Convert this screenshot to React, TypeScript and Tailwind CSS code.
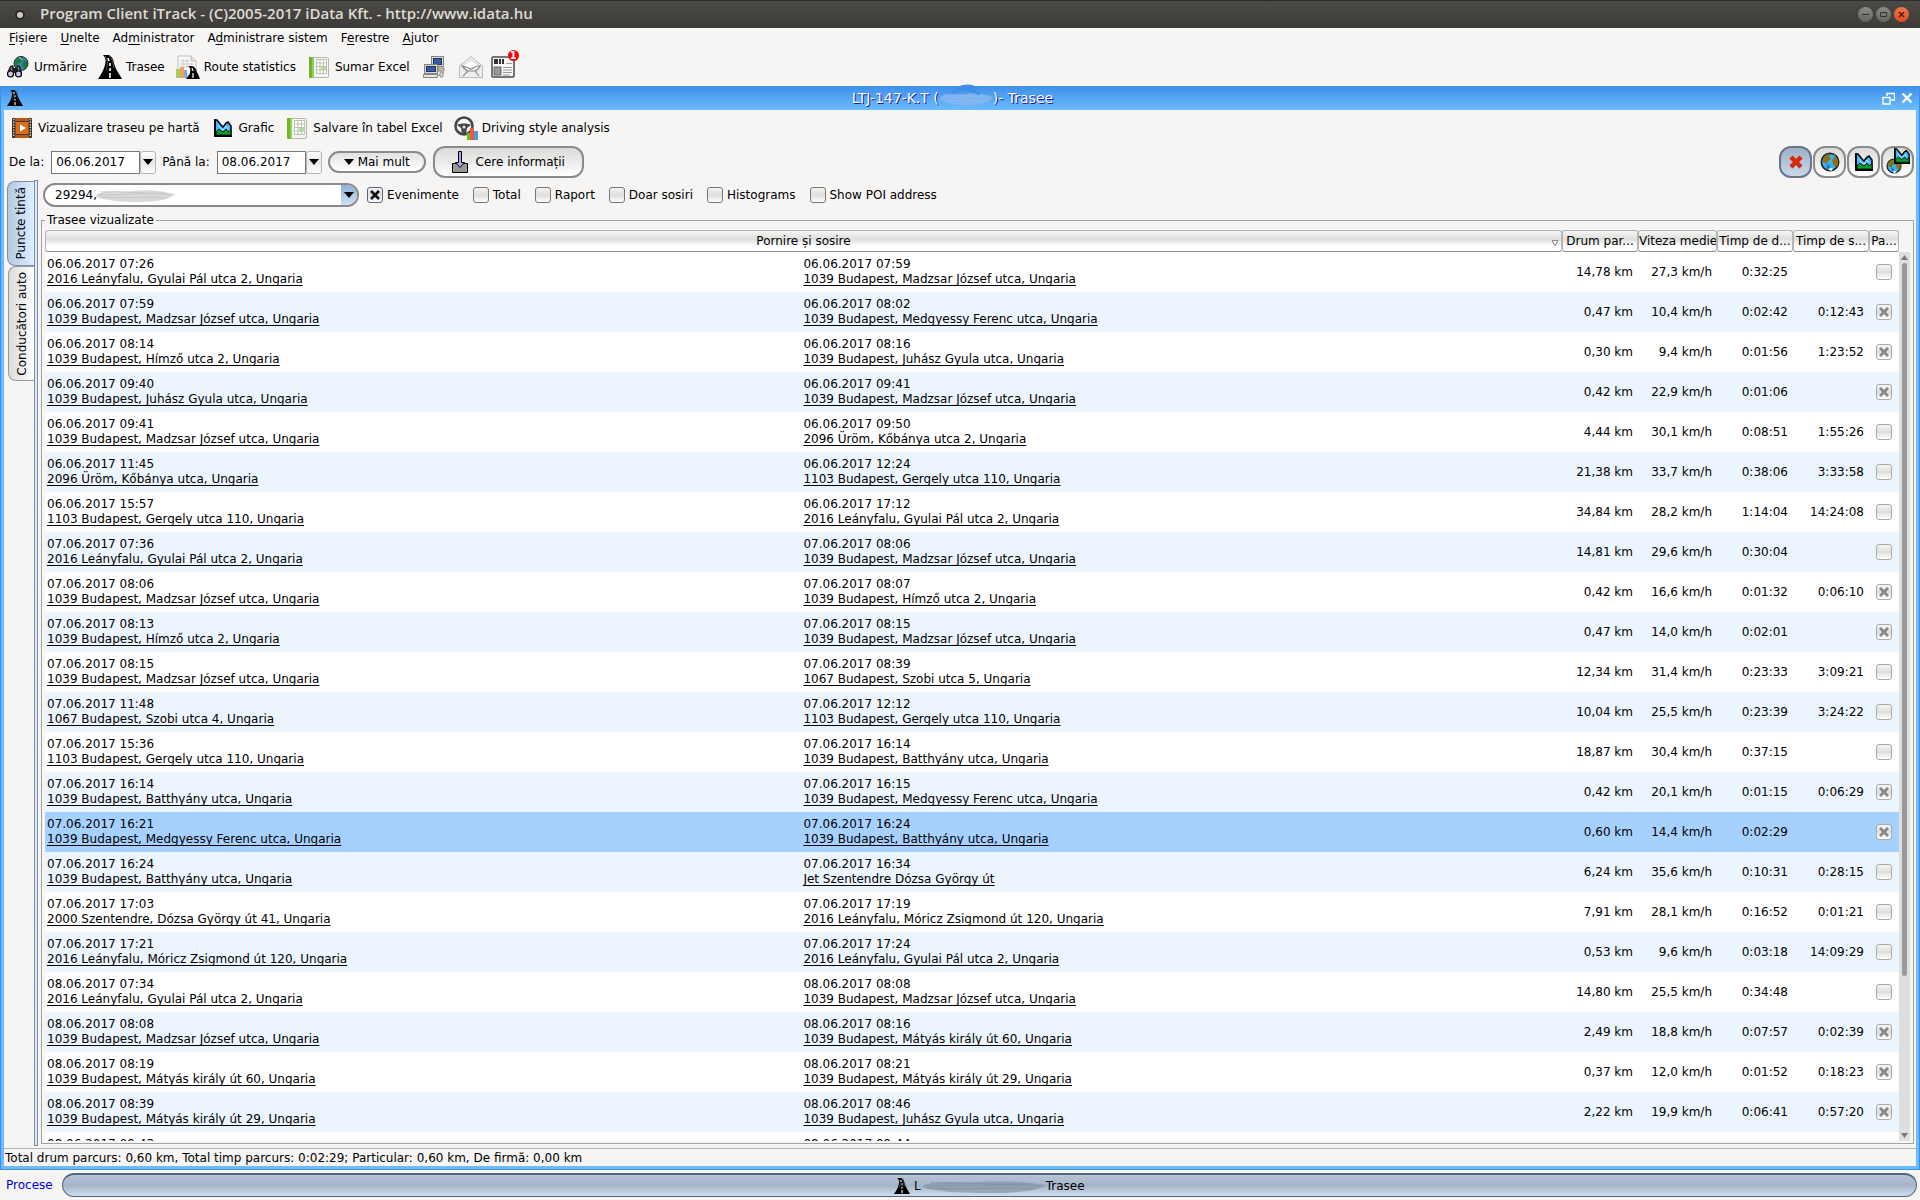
import React, { useState } from 'react';
import clsx from 'clsx';

interface Trip {
    from: [string, string];
    to: [string, string];
    km: string;
    speed: string;
    drive: string;
    stop: string;
    private: boolean;
}

const trip = (
    startTime: string, startPlace: string, endTime: string, endPlace: string,
    km: string, speed: string, drive: string, stop: string, isPrivate: boolean
): Trip => ({ from: [startTime, startPlace], to: [endTime, endPlace], km, speed, drive, stop, private: isPrivate });

const GYULAI = '2016 Leányfalu, Gyulai Pál utca 2, Ungaria';
const MADZSAR = '1039 Budapest, Madzsar József utca, Ungaria';
const MEDGYESSY = '1039 Budapest, Medgyessy Ferenc utca, Ungaria';
const HIMZO = '1039 Budapest, Hímző utca 2, Ungaria';
const JUHASZ = '1039 Budapest, Juhász Gyula utca, Ungaria';
const GERGELY = '1103 Budapest, Gergely utca 110, Ungaria';
const BATTHYANY = '1039 Budapest, Batthyány utca, Ungaria';
const MORICZ = '2016 Leányfalu, Móricz Zsigmond út 120, Ungaria';
const MATYAS_60 = '1039 Budapest, Mátyás király út 60, Ungaria';
const MATYAS_29 = '1039 Budapest, Mátyás király út 29, Ungaria';

const trips: Trip[] = [
    trip('06.06.2017 07:26', GYULAI, '06.06.2017 07:59', MADZSAR, '14,78', '27,3', '0:32:25', '', false),
    trip('06.06.2017 07:59', MADZSAR, '06.06.2017 08:02', MEDGYESSY, '0,47', '10,4', '0:02:42', '0:12:43', true),
    trip('06.06.2017 08:14', HIMZO, '06.06.2017 08:16', JUHASZ, '0,30', '9,4', '0:01:56', '1:23:52', true),
    trip('06.06.2017 09:40', JUHASZ, '06.06.2017 09:41', MADZSAR, '0,42', '22,9', '0:01:06', '', true),
    trip('06.06.2017 09:41', MADZSAR, '06.06.2017 09:50', '2096 Üröm, Kőbánya utca 2, Ungaria', '4,44', '30,1', '0:08:51', '1:55:26', false),
    trip('06.06.2017 11:45', '2096 Üröm, Kőbánya utca, Ungaria', '06.06.2017 12:24', GERGELY, '21,38', '33,7', '0:38:06', '3:33:58', false),
    trip('06.06.2017 15:57', GERGELY, '06.06.2017 17:12', GYULAI, '34,84', '28,2', '1:14:04', '14:24:08', false),
    trip('07.06.2017 07:36', GYULAI, '07.06.2017 08:06', MADZSAR, '14,81', '29,6', '0:30:04', '', false),
    trip('07.06.2017 08:06', MADZSAR, '07.06.2017 08:07', HIMZO, '0,42', '16,6', '0:01:32', '0:06:10', true),
    trip('07.06.2017 08:13', HIMZO, '07.06.2017 08:15', MADZSAR, '0,47', '14,0', '0:02:01', '', true),
    trip('07.06.2017 08:15', MADZSAR, '07.06.2017 08:39', '1067 Budapest, Szobi utca 5, Ungaria', '12,34', '31,4', '0:23:33', '3:09:21', false),
    trip('07.06.2017 11:48', '1067 Budapest, Szobi utca 4, Ungaria', '07.06.2017 12:12', GERGELY, '10,04', '25,5', '0:23:39', '3:24:22', false),
    trip('07.06.2017 15:36', GERGELY, '07.06.2017 16:14', BATTHYANY, '18,87', '30,4', '0:37:15', '', false),
    trip('07.06.2017 16:14', BATTHYANY, '07.06.2017 16:15', MEDGYESSY, '0,42', '20,1', '0:01:15', '0:06:29', true),
    trip('07.06.2017 16:21', MEDGYESSY, '07.06.2017 16:24', BATTHYANY, '0,60', '14,4', '0:02:29', '', true),
    trip('07.06.2017 16:24', BATTHYANY, '07.06.2017 16:34', 'Jet Szentendre Dózsa György út', '6,24', '35,6', '0:10:31', '0:28:15', false),
    trip('07.06.2017 17:03', '2000 Szentendre, Dózsa György út 41, Ungaria', '07.06.2017 17:19', MORICZ, '7,91', '28,1', '0:16:52', '0:01:21', false),
    trip('07.06.2017 17:21', MORICZ, '07.06.2017 17:24', GYULAI, '0,53', '9,6', '0:03:18', '14:09:29', false),
    trip('08.06.2017 07:34', GYULAI, '08.06.2017 08:08', MADZSAR, '14,80', '25,5', '0:34:48', '', false),
    trip('08.06.2017 08:08', MADZSAR, '08.06.2017 08:16', MATYAS_60, '2,49', '18,8', '0:07:57', '0:02:39', true),
    trip('08.06.2017 08:19', MATYAS_60, '08.06.2017 08:21', MATYAS_29, '0,37', '12,0', '0:01:52', '0:18:23', true),
    trip('08.06.2017 08:39', MATYAS_29, '08.06.2017 08:46', JUHASZ, '2,22', '19,9', '0:06:41', '0:57:20', true),
    // still loading
    trip('08.06.2017 09:43', '', '08.06.2017 09:44', '', '', '', '', '', false),
];

/* ---------- icons ---------- */

const RoadIcon = ({ className }: { className: string }) => (
    <svg viewBox="0 0 24 24" className={className} aria-hidden="true">
        <path d="M5 0h6c5 3 4 6 6 11 1 4 5 9 7 13H0c3-5 6-9 7-14 1-4 1-7-2-10z" fill="#000" />
        <path d="M7 1c3 4 3 9 1 14M11 1c4 3 4 8 5 12" stroke="#777" strokeWidth="0.7" fill="none" />
        <path d="M10 3l1 3M12 8v3M12 13v3M12 18v5" stroke="#fff" strokeWidth="1.6" />
    </svg>
);

const TrackIcon = () => (
    <svg viewBox="0 0 22 22" className="size-[22px]" aria-hidden="true">
        <circle cx="14" cy="7.5" r="7" fill="#3c7fa6" stroke="#123" />
        <path d="M9 3c3-3 6-2 7 0l-2 3-3 1-2 4c-2-2-2-5 0-8zM17 4l3 2v5l-3 2-2-4z" fill="#1c7a42" />
        <path d="M12 2c2 0 3 1 3 2" stroke="#bfe6e0" fill="none" />
        <path d="M3 10l3-1 1 3h2l1-3 3 1 2 7H0z" fill="#222" />
        <path d="M4 11l1 4M11 11l1 4" stroke="#999" />
        <circle cx="3.5" cy="18" r="3" fill="#c5c5f0" stroke="#000" strokeWidth="1.2" />
        <circle cx="11.5" cy="18" r="3" fill="#c5c5f0" stroke="#000" strokeWidth="1.2" />
    </svg>
);

const StatsIcon = () => (
    <svg viewBox="0 0 24 24" className="size-6" aria-hidden="true">
        <path d="M2 1h13l5 5v15H2z" fill="#fafafa" stroke="#bbb" />
        <path d="M15 1v5h5" fill="#e4e4e4" stroke="#bbb" />
        <path d="M4 6h9M4 9h14M4 12h14M7 4v9M11 4v9M15 8v5" stroke="#ccc" />
        <path d="M0 14h4v9H0z" fill="#a3d15c" />
        <path d="M4 12h4v11H4z" fill="#f2a35e" />
        <path d="M8 15h3v8H8z" fill="#6fb1dc" />
        <path d="M12 11h4c5 2 4 5 6 8l2 5H10c2-3 4-4 4-7 1-3 0-4-2-6z" fill="#000" />
        <path d="M16 13l1 3M17 18v5" stroke="#fff" strokeWidth="1.2" />
    </svg>
);

const ExcelIcon = () => (
    <svg viewBox="0 0 22 22" className="size-[22px]" aria-hidden="true">
        <rect x="1.5" y="1.5" width="19" height="20" rx="1.5" fill="#f4f4f4" stroke="#b5b5b5" />
        <path d="M1 1h5v21H2c-1 0-1-1-1-2z" fill="#6cb52d" />
        <path d="M4 1h2v21H4z" fill="#8fd04e" />
        <path d="M8.5 3.5h10v14h-10z" fill="#fff" stroke="#b9c4ae" />
        <path d="M13 10h5v4h-5z" fill="#b7e08c" />
        <path d="M8 7h11M8 10.5h11M8 14h11M12 3v15M15.500 3v15" stroke="#b9c4ae" />
    </svg>
);

const ComputersIcon = () => (
    <svg viewBox="0 0 22 22" className="size-[22px]" aria-hidden="true">
        <rect x="8.5" y="0.5" width="12" height="10" fill="#d9d9d0" stroke="#85857d" />
        <rect x="10.5" y="2.5" width="8" height="6" fill="#3a5c9e" stroke="#1d3568" />
        <path d="M15 12h6v3h-6z" fill="#c8c8c0" stroke="#85857d" />
        <rect x="1.5" y="8.5" width="13" height="9" fill="#d9d9d0" stroke="#85857d" />
        <rect x="3.5" y="10.5" width="9" height="5" fill="#3a5c9e" stroke="#1d3568" />
        <path d="M0.500 18.500h14v3h-14z" fill="#e8e8e0" stroke="#85857d" />
        <path d="M15 19c3 1 5 0 5-3" stroke="#85857d" fill="none" />
        <rect x="17" y="16" width="3" height="5" rx="1" fill="#ddd" stroke="#85857d" />
    </svg>
);

const MailIcon = () => (
    <svg viewBox="0 0 24 22" className="h-[22px] w-6" aria-hidden="true">
        <path d="M0.500 10L12 0.500 23.500 10v11.500H0.500z" fill="#eee" stroke="#b9b9b9" />
        <path d="M4 9l8-5 8 5v5H4z" fill="#fff" stroke="#d2d2d2" />
        <path d="M3 10l4 1 5 2 6-3h3l-4 5H8zM4 20l5-5h7l4 5" stroke="#8b8b8b" strokeWidth="1.2" fill="none" />
    </svg>
);

const NewsIcon = () => (
    <svg viewBox="0 0 24 22" className="h-[22px] w-6" aria-hidden="true">
        <rect x="1" y="1" width="22" height="20" rx="1" fill="#f7f7f7" stroke="#4c4c4c" strokeWidth="1.5" />
        <path d="M3 3h4v5H3zM8 3h2v5H8zM11 3h2v5h-2z" fill="#333" />
        <path d="M3 11h7v8H3z" fill="#999" stroke="#666" />
        <path d="M12 11.500h9M12 14h9M12 16.500h9M12 19h7M15 7.500h6" stroke="#999" />
    </svg>
);

const FilmIcon = () => (
    <svg viewBox="0 0 22 22" className="size-[22px]" aria-hidden="true">
        <rect x="1" y="1" width="20" height="20" rx="1" fill="#3a322c" />
        <path d="M4.500 1h13v20h-13z" fill="#d86f1c" />
        <path d="M4.500 1h13v3h-13zM4.500 18h13v3h-13z" fill="#b95a18" />
        <path d="M4.500 4.500h13M4.500 17.500h13" stroke="#5c3410" />
        <path d="M2.700 2v18M19.300 2v18" stroke="#ddd" strokeWidth="1.3" strokeDasharray="1.3 1.3" />
        <path d="M9 7.500l6 3.500-6 3.500z" fill="#fff" />
    </svg>
);

const ChartIcon = ({ className }: { className: string }) => (
    <svg viewBox="0 0 18 18" className={className} aria-hidden="true">
        <path d="M1 1h2l4 5 2 2 3-4 2-1 3 4v10H1z" fill="#47b4ff" stroke="#000" strokeWidth="1.5" />
        <path d="M4 6l3 4 2 1 3-4 2 3" stroke="#b9e4ff" fill="none" />
        <path d="M2 13l3-3 4 3 3-3 2 3 3-2v5H2z" fill="#0c9b25" stroke="#000" strokeWidth="0.8" />
        <path d="M1 0v17.200h17" stroke="#000" strokeWidth="1.7" fill="none" />
    </svg>
);

const WheelIcon = () => (
    <svg viewBox="0 0 24 24" className="size-6" aria-hidden="true">
        <circle cx="10" cy="10" r="8.500" fill="none" stroke="#474747" strokeWidth="2.6" />
        <path d="M3 9c4-2 10-2 14 0l-4 3-1 6H8l-1-6z" fill="#474747" />
        <circle cx="10" cy="11" r="1.6" fill="#ddd" />
        <path d="M13 17h3v7h-3z" fill="#6abf1e" />
        <path d="M16 12h4v12h-4z" fill="#f0573c" />
        <path d="M20 15h4v9h-4z" fill="#4a9de0" />
    </svg>
);

const GlobeIcon = ({ className }: { className: string }) => (
    <svg viewBox="0 0 20 20" className={className} aria-hidden="true">
        <circle cx="10" cy="10" r="8.700" fill="#3aaef0" stroke="#222" strokeWidth="1.6" />
        <path d="M3 6c2-3 5-4 8-4l-2 3 2 2-3 2-1 3-4-2zM12 8l3-3 3 3v5l-3 2-2-3zM14 2l2 2-2 1z" fill="#8a7412" />
        <path d="M7 12l3 2-1 4-2-2z" fill="#1f6fa8" />
        <path d="M8 17c2-1 4-1 5 0l-2 2z" fill="#fff" />
    </svg>
);

const DownloadIcon = () => (
    <svg viewBox="0 0 16 22" className="h-[22px] w-4" aria-hidden="true">
        <path d="M0.500 12.500h15v9H0.500z" fill="#999" stroke="#000" />
        <path d="M6.500 0.500h3v11h3L8 16.500l-4.500-5h3z" fill="#a9a9ee" stroke="#000" />
    </svg>
);

const CaretDown = () => (
    <svg viewBox="0 0 10 6" className="h-[6px] w-[10px] shrink-0" aria-hidden="true">
        <path d="M0 0h10L5 6z" fill="#000" />
    </svg>
);

// name part that the operator has wiped out
const Smudge = ({ className, tone, children }: { className?: string; tone: string; children?: React.ReactNode }) => (
    <svg viewBox="0 0 80 16" preserveAspectRatio="none" className={clsx('overflow-visible', className)} aria-hidden="true">
        <path d="M0 9C12 1 24 6 38 4s28 0 42 3c-6 7-24 8-38 8S10 14 0 9z" fill={tone} opacity="0.7" />
        <path d="M2 7c20 3 42-3 74 1M4 10c22 2 42-1 68 1M6 5c20-1 44 2 64 1" stroke={tone} strokeWidth="1" fill="none" />
        {children}
    </svg>
);

/* ---------- small controls ---------- */

interface CheckProps {
    id: string;
    checked: boolean;
    onChange?: () => void;
    muted?: boolean;
    label: string;
    hideLabel?: boolean;
}

const Check = ({ id, checked, onChange, muted, label, hideLabel }: CheckProps) => (
    <span className="flex items-center gap-1">
        <span className="relative block size-4 shrink-0">
            <input
                id={id}
                type="checkbox"
                checked={checked}
                onChange={onChange}
                readOnly={!onChange}
                aria-label={hideLabel ? label : undefined}
                className={clsx(
                    'block size-4 appearance-none rounded-[3px] border bg-linear-to-b from-[#f4f4f4] via-[#dededc] to-white',
                    muted ? 'border-[#aaa]' : 'border-[#777]',
                    checked && !muted && 'border-[#56657a] from-[#dbe7f6] via-[#c3d2e6] to-[#eaf3ff]'
                )}
            />
            {checked && (
                <svg viewBox="0 0 16 16" className="pointer-events-none absolute inset-0 size-4" aria-hidden="true">
                    <path d="M4 4l8 8M12 4l-8 8" stroke={muted ? '#858585' : '#111'} strokeWidth="2.6" />
                </svg>
            )}
        </span>
        {!hideLabel && <label htmlFor={id}>{label}</label>}
    </span>
);

const ToolButton = ({ icon, children }: { icon: React.ReactNode; children: React.ReactNode }) => (
    <button className="flex items-center gap-1 whitespace-nowrap">
        <span className="flex w-6 justify-center">{icon}</span>
        {children}
    </button>
);

const DateField = ({ id, label, value }: { id: string; label: string; value: string }) => (
    <div className="flex items-center">
        <label htmlFor={id} className="mr-[7px]">{label}</label>
        <input id={id} type="text" defaultValue={value} className="h-[23px] w-[89px] border border-[#777] bg-white px-1" />
        <button aria-label="Calendar" className="flex h-[23px] w-4 items-center justify-center rounded-[3px] border border-[#b5b5b5] bg-linear-to-b from-white via-[#e6e6e4] to-white">
            <CaretDown />
        </button>
    </div>
);

const viewButton = 'flex h-8 w-[33px] items-center justify-center rounded-xl border-2';

/* ---------- page parts ---------- */

const menus: [string, string, string][] = [
    ['', 'F', 'ișiere'],
    ['', 'U', 'nelte'],
    ['Ad', 'm', 'inistrator'],
    ['A', 'd', 'ministrare sistem'],
    ['F', 'e', 'restre'],
    ['', 'A', 'jutor'],
];

const TitleBar = () => (
    <header className="flex h-7 shrink-0 items-center border-t border-[#2c2b28] bg-linear-to-b from-[#4b4a46] to-[#3c3b37] pr-[11px] pl-[15px] text-[#dfdbd2]">
        <span className="mr-[15px] size-[10px] rounded-full border-2 border-[#2a2926] bg-[#cfccc4]" />
        <h1 className="flex-1 pb-[3px] font-['Open_Sans',sans-serif] text-[15px] font-semibold">
            Program Client iTrack - (C)2005-2017 iData Kft. - http://www.idata.hu
        </h1>
        <div className="flex gap-[3px]">
            <button aria-label="Minimize" className="size-[15px] rounded-full bg-linear-to-b from-[#8c8b85] to-[#64635e]">
                <svg viewBox="0 0 15 15"><path d="M4 7.500h7" stroke="#33322f" /></svg>
            </button>
            <button aria-label="Maximize" className="size-[15px] rounded-full bg-linear-to-b from-[#8c8b85] to-[#64635e]">
                <svg viewBox="0 0 15 15"><path d="M4.500 5.500h6v4h-6z" stroke="#33322f" fill="none" /></svg>
            </button>
            <button aria-label="Close" className="size-[15px] rounded-full bg-linear-to-b from-[#f4744c] to-[#e04a1b]">
                <svg viewBox="0 0 15 15"><path d="M5 5l5 5M10 5l-5 5" stroke="#4a1c0c" strokeWidth="1.4" /></svg>
            </button>
        </div>
    </header>
);

const MainToolbar = () => (
    <div className="flex h-[38px] shrink-0 items-center gap-[11px] pl-[6px]">
        <ToolButton icon={<TrackIcon />}>Urmărire</ToolButton>
        <ToolButton icon={<RoadIcon className="size-6" />}>Trasee</ToolButton>
        <ToolButton icon={<StatsIcon />}>Route statistics</ToolButton>
        <ToolButton icon={<ExcelIcon />}>Sumar Excel</ToolButton>
        <div className="flex gap-2 pl-[2px]">
            <button aria-label="Computers" className="mr-[6px]"><ComputersIcon /></button>
            <button aria-label="Messages"><MailIcon /></button>
            <button aria-label="News" className="relative">
                <NewsIcon />
                <span className="absolute -top-[6px] -right-1 flex size-[11px] items-center justify-center rounded-full bg-[#f00] text-[10px] font-bold text-white">1</span>
            </button>
        </div>
    </div>
);

const header = 'relative h-[22px] overflow-hidden rounded-[3px] border border-[#b5b5b5] border-b-[#8c8c8c] bg-linear-to-b from-[#f6f6f6] via-[#dededc] via-40% to-white to-75% p-0 text-center font-normal whitespace-nowrap';

const TripTable = () => {
    const [selected, setSelected] = useState(14);

    return (
        <table className="w-full table-fixed border-separate border-spacing-0">
            <colgroup>
                <col className="w-[40.8%]" />
                <col />
                <col className="w-[76px]" />
                <col className="w-[79px]" />
                <col className="w-[76px]" />
                <col className="w-[76px]" />
                <col className="w-[30px]" />
            </colgroup>
            <thead>
                <tr>
                    <th colSpan={2} className={header}>
                        Pornire și sosire
                        <svg viewBox="0 0 8 7" className="absolute right-[2px] bottom-1 h-[7px] w-2" aria-hidden="true">
                            <path d="M1 0.500h6L4 6z" fill="#fff" stroke="#888" />
                        </svg>
                    </th>
                    <th className={header}>Drum par...</th>
                    <th className={header}>Viteza medie</th>
                    <th className={header}>Timp de d...</th>
                    <th className={header}>Timp de s...</th>
                    <th className={header}>Pa...</th>
                </tr>
            </thead>
            <tbody>
                {trips.map((item, i) => (
                    <tr
                        key={item.from[0]}
                        onClick={() => setSelected(i)}
                        className={clsx('h-10', i === selected ? 'bg-[#a6d1ff]' : i % 2 ? 'bg-[#ecf5fe]' : 'bg-white')}
                    >
                        {[item.from, item.to].map(([time, place]) => (
                            <td key={time} className="h-10 overflow-hidden px-[2px] py-[5px] align-top leading-[15px] whitespace-nowrap">
                                <div>{time}</div>
                                {place && <a href="#map" className="block underline underline-offset-2">{place}</a>}
                            </td>
                        ))}
                        <td className="py-0 pr-[5px] text-right">{item.km && `${item.km} km`}</td>
                        <td className="py-0 pr-[5px] text-right">{item.speed && `${item.speed} km/h`}</td>
                        <td className="py-0 pr-[5px] text-right">{item.drive}</td>
                        <td className="py-0 pr-[5px] text-right">{item.stop}</td>
                        <td className="py-0 pl-[7px]">
                            {item.km && <Check id={`private-${i}`} checked={item.private} muted hideLabel label="Particular" />}
                        </td>
                    </tr>
                ))}
            </tbody>
        </table>
    );
};

const ScrollBar = () => (
    <div className="mt-[22px] flex w-[11px] flex-col items-center bg-[#dfdfdf] py-[3px]" aria-hidden="true">
        <svg viewBox="0 0 7 5" className="h-[5px] w-[7px]"><path d="M3.500 0L7 5H0z" fill="#777" /></svg>
        <div className="mt-[3px] flex w-[5px] flex-1 flex-col">
            <div className="h-[82%] rounded-full bg-[#999]" />
        </div>
        <svg viewBox="0 0 7 5" className="h-[5px] w-[7px]"><path d="M0 0h7L3.500 5z" fill="#777" /></svg>
    </div>
);

const filters = ['Evenimente', 'Total', 'Raport', 'Doar sosiri', 'Histograms', 'Show POI address'];

const RoutesWindow = () => {
    const [active, setActive] = useState<string[]>(['Evenimente']);
    const toggle = (name: string) =>
        setActive(active.includes(name) ? active.filter((f) => f !== name) : [...active, name]);

    return (
        <main className="flex min-h-0 flex-1 flex-col border-r border-b border-l border-[#3d8fe6]">
            <div className="flex h-6 shrink-0 items-center bg-linear-to-b from-[#3d8fe9] to-[#6cbcff] px-[6px] text-white">
                <RoadIcon className="size-4" />
                <h2 className="flex flex-1 items-center justify-center text-[14px] [text-shadow:1px_1px_0_#1a1a9c]">
                    LTJ-147-K.T (
                    <Smudge className="h-4 w-[54px]" tone="#8fb8f0">
                        <path d="M24 0c8-5 24-5 32-1M20 3c12-6 24-5 40 1" stroke="#3d8fe9" strokeWidth="3" fill="none" />
                    </Smudge>
                    )- Trasee
                </h2>
                <button aria-label="Restore" className="mr-[6px]">
                    <svg viewBox="0 0 13 13" className="size-[13px]">
                        <path d="M5 4V1.500h7.500V8H9M1 5.500h7v6.500H1z" fill="none" stroke="#fff" strokeWidth="1.4" />
                    </svg>
                </button>
                <button aria-label="Close window">
                    <svg viewBox="0 0 12 12" className="size-3">
                        <path d="M1.500 1.500l9 9M10.500 1.500l-9 9" stroke="#fff" strokeWidth="2.4" />
                    </svg>
                </button>
            </div>

            <div className="flex min-h-0 flex-1 flex-col border-x-3 border-b-3 border-[#6cbcff] bg-[#f6f5f4]">
                <div className="flex h-9 shrink-0 items-center gap-[11px] pl-[6px]">
                    <ToolButton icon={<FilmIcon />}>Vizualizare traseu pe hartă</ToolButton>
                    <ToolButton icon={<ChartIcon className="size-[18px]" />}>Grafic</ToolButton>
                    <ToolButton icon={<ExcelIcon />}>Salvare în tabel Excel</ToolButton>
                    <ToolButton icon={<WheelIcon />}>Driving style analysis</ToolButton>
                </div>

                <div className="flex h-8 shrink-0 items-center pr-[2px] pl-[5px]">
                    <DateField id="from" label="De la:" value="06.06.2017" />
                    <div className="w-[6px]" />
                    <DateField id="to" label="Până la:" value="08.06.2017" />
                    <button className="ml-[6px] flex h-[22px] w-[98px] items-center justify-center gap-1 rounded-full border-2 border-[#8a8a8a] bg-linear-to-b from-[#e2e2e2] via-[#f2f2f0] to-white">
                        <CaretDown />
                        Mai mult
                    </button>
                    <button className="ml-[7px] flex h-8 w-[151px] items-center justify-center gap-2 rounded-xl border-2 border-[#8a8a8a] bg-linear-to-b from-[#dadad8] via-[#ececea] to-white">
                        <DownloadIcon />
                        Cere informații
                    </button>
                    <div className="ml-auto flex gap-px">
                        <button aria-label="Table only" className={clsx(viewButton, 'border-[#66758a] bg-linear-to-b from-[#9fb0c6] to-[#cad8ea]')}>
                            <svg viewBox="0 0 14 14" className="size-[14px]">
                                <path d="M2 2l10 10M12 2L2 12" stroke="#d42a0c" strokeWidth="4.5" />
                            </svg>
                        </button>
                        <button aria-label="Map" className={clsx(viewButton, 'border-[#8a8a8a] bg-linear-to-b from-[#dadad8] to-white')}>
                            <GlobeIcon className="size-5" />
                        </button>
                        <button aria-label="Chart" className={clsx(viewButton, 'border-[#8a8a8a] bg-linear-to-b from-[#dadad8] to-white')}>
                            <ChartIcon className="size-[18px]" />
                        </button>
                        <button aria-label="Map and chart" className={clsx(viewButton, 'relative border-[#8a8a8a] bg-linear-to-b from-[#dadad8] to-white')}>
                            <GlobeIcon className="absolute bottom-[2px] left-[3px] size-4" />
                            <ChartIcon className="absolute top-0 right-[2px] size-4" />
                        </button>
                    </div>
                </div>

                <div className="flex min-h-0 flex-1 pl-[3px]">
                    <nav className="flex w-[27px] shrink-0 flex-col items-end pt-[3px]">
                        <button className="flex h-[85px] w-[27px] items-center justify-center rounded-l-lg border border-r-0 border-[#7d8ea6] bg-linear-to-r from-[#b4c8e2] via-[#c9dcf4] to-[#dfeeff]">
                            <span className="rotate-180 whitespace-nowrap [writing-mode:vertical-rl]">Puncte tintă</span>
                        </button>
                        <button className="flex h-[115px] w-[26px] items-center justify-center rounded-l-lg border border-r-0 border-[#999] bg-linear-to-r from-[#dcdcda] via-[#ececea] to-white">
                            <span className="rotate-180 whitespace-nowrap [writing-mode:vertical-rl]">Conducători auto</span>
                        </button>
                    </nav>

                    <div className="my-[2px] w-1 shrink-0 border border-[#7d8ea6] bg-[#dce9f9]" />

                    <div className="flex min-w-0 flex-1 flex-col pr-[2px] pb-1 pl-[3px]">
                        <div className="flex h-[34px] shrink-0 items-center gap-[14px] pl-[2px]">
                            <div className="relative mr-[-6px] flex h-6 w-[316px] items-center overflow-hidden rounded-full border-2 border-[#8a8a8a] bg-white">
                                <select aria-label="Vehicul" className="h-full flex-1 appearance-none pl-[10px]">
                                    <option>29294,</option>
                                </select>
                                <Smudge className="pointer-events-none absolute left-[50px] h-4 w-[80px]" tone="#c9c9c9" />
                                <span className="pointer-events-none flex h-full w-4 items-center justify-center bg-linear-to-b from-[#8fb0d6] to-[#cfe2f8]">
                                    <CaretDown />
                                </span>
                            </div>
                            {filters.map((name) => (
                                <Check key={name} id={`filter-${name}`} label={name} checked={active.includes(name)} onChange={() => toggle(name)} />
                            ))}
                        </div>

                        <fieldset className="flex min-h-0 min-w-0 flex-1 flex-col border border-[#a3a3a3] px-[3px] pb-[2px]">
                            <legend className="h-4 px-[2px] leading-4">Trasee vizualizate</legend>
                            <div className="mt-[2px] flex min-h-0 flex-1">
                                <div className="min-h-0 min-w-0 flex-1 overflow-hidden">
                                    <TripTable />
                                </div>
                                <ScrollBar />
                            </div>
                        </fieldset>
                    </div>
                </div>

                <p className="h-[18px] shrink-0 border-t border-[#b5b5b5] pl-px leading-[18px]">
                    Total drum parcurs: 0,60 km, Total timp parcurs: 0:02:29; Particular: 0,60 km, De firmă: 0,00 km
                </p>
            </div>
        </main>
    );
};

const TaskBar = () => (
    <footer className="flex h-[30px] shrink-0 items-center gap-[9px] pr-[3px] pl-[6px]">
        <a href="#processes" className="text-[#0000e6]">Procese</a>
        <button className="flex h-6 flex-1 items-center justify-center rounded-xl border border-t-2 border-[#566579] bg-linear-to-b from-[#b4c4d8] via-[#a6b5c8] to-[#cfddf0]">
            <RoadIcon className="mr-1 size-4" />
            L
            <Smudge className="h-4 w-[125px]" tone="#8795a8" />
            Trasee
        </button>
    </footer>
);

const App = () => {
    return (
        <div className="flex h-screen flex-col bg-[#f6f5f4] font-['DejaVu_Sans',sans-serif] text-xs text-black">
            <TitleBar />
            <nav className="flex h-5 shrink-0 items-center gap-[13px] pl-[9px]">
                {menus.map(([before, key, after]) => (
                    <button key={before + key + after} className="whitespace-nowrap">
                        {before}<span className="underline underline-offset-2">{key}</span>{after}
                    </button>
                ))}
            </nav>
            <MainToolbar />
            <RoutesWindow />
            <TaskBar />
        </div>
    );
};

export default App;
